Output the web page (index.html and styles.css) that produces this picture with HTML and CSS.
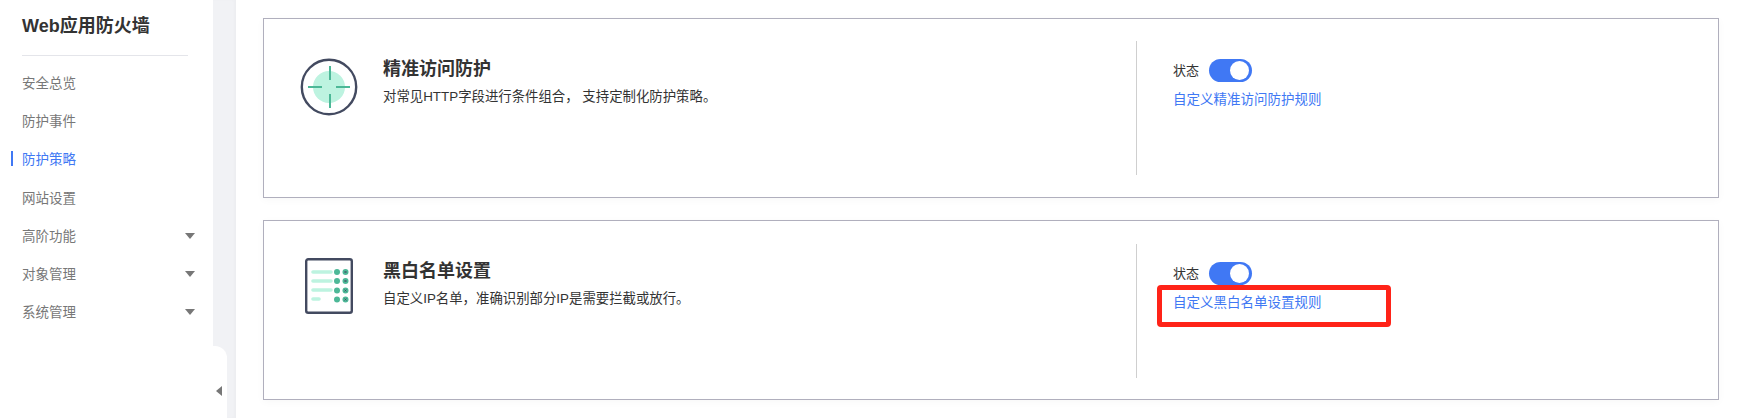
FILE: index.html
```html
<!DOCTYPE html>
<html lang="zh-CN">
<head>
<meta charset="utf-8">
<title>Web应用防火墙</title>
<link rel="stylesheet" href="styles.css">
</head>
<body>
<div class="page">
  <aside class="sidebar">
    <h1 class="brand">Web应用防火墙</h1>
    <ul class="menu">
      <li class="menu-item">安全总览</li>
      <li class="menu-item">防护事件</li>
      <li class="menu-item is-active">防护策略</li>
      <li class="menu-item">网站设置</li>
      <li class="menu-item">高阶功能<i class="caret"></i></li>
      <li class="menu-item">对象管理<i class="caret"></i></li>
      <li class="menu-item">系统管理<i class="caret"></i></li>
    </ul>
  </aside>
  <div class="gutter"><div class="collapse"><i class="collapse-arrow"></i></div></div>
  <main class="main">
    <section class="card">
      <svg class="card-icon" width="64" height="64" viewBox="0 0 64 64">
        <circle cx="32" cy="32" r="16" fill="#bdf3e0"/>
        <circle cx="32" cy="32" r="27.2" fill="none" stroke="#434a60" stroke-width="2.4"/>
        <path d="M11 32h14M39 32h14M33 11v14M33 39v14" fill="none" stroke="#4cb897" stroke-width="2"/>
      </svg>
      <div class="card-text">
        <h2 class="card-title">精准访问防护</h2>
        <p class="card-desc">对常见HTTP字段进行条件组合， 支持定制化防护策略。</p>
      </div>
      <div class="card-side">
        <div class="status"><span>状态</span><span class="switch"><i class="knob"></i></span></div>
        <a class="rule-link">自定义精准访问防护规则</a>
      </div>
    </section>
    <section class="card">
      <svg class="card-icon" width="64" height="64" viewBox="0 0 64 64">
        <rect x="9.2" y="2.2" width="45.6" height="53.6" rx="2" fill="#fff" stroke="#434a60" stroke-width="2.4"/>
        <path d="M16 15h18M16 24h18M16 33h18M16 42h6" fill="none" stroke="#bdf3e0" stroke-width="3.6" stroke-linecap="round"/>
        <g fill="#4cb897">
          <circle cx="40" cy="15" r="3"/><circle cx="48.500" cy="15" r="3"/>
          <circle cx="40" cy="24" r="3"/><circle cx="48.500" cy="24" r="3"/>
          <circle cx="40" cy="33.500" r="3"/><circle cx="48.500" cy="33.500" r="3"/>
          <circle cx="40" cy="42.500" r="3"/><circle cx="48.500" cy="42.500" r="3"/>
        </g>
        <path d="M47.500 14l2 2M49.500 14l-2 2M47.500 23l2 2M49.500 23l-2 2M47.500 32.500l2 2M49.500 32.500l-2 2M47.500 41.500l2 2M49.500 41.500l-2 2" stroke="#434a60" stroke-width=".8" fill="none"/>
      </svg>
      <div class="card-text">
        <h2 class="card-title">黑白名单设置</h2>
        <p class="card-desc">自定义IP名单，准确识别部分IP是需要拦截或放行。</p>
      </div>
      <div class="card-side">
        <div class="status"><span>状态</span><span class="switch"><i class="knob"></i></span></div>
        <a class="rule-link has-mark">自定义黑白名单设置规则<i class="mark"></i></a>
      </div>
    </section>
  </main>
</div>
</body>
</html>
```

FILE: styles.css
```css
* { box-sizing: border-box; }
html, body { margin: 0; height: 100%; background: #fff; overflow: hidden; }
body { font-family: "Liberation Sans", "Noto Sans CJK SC", sans-serif; color: #252b3a; }
ul, h1, h2, p { margin: 0; padding: 0; }
i { display: block; }

.page { display: flex; height: 418px; }

.sidebar { width: 213px; flex: none; background: #fff; padding: 0 25px 0 22px; }
.brand { font-size: 18px; line-height: 22px; font-weight: 700; color: #333; padding: 15px 0 18px; border-bottom: 1px solid #e4e5ea; width: 166px; }
.menu { list-style: none; padding-top: 7px; }
.menu-item { position: relative; display: flex; align-items: center; height: 38.2px; font-size: 13.500px; color: #777; }
.is-active { color: #4078f4; }
.is-active::before { content: ""; position: absolute; left: -11px; top: 12px; width: 2px; height: 15px; background: #4078f4; }
.caret { position: absolute; right: -7px; top: 17px; width: 0; height: 0; border: 5px solid transparent; border-top: 6px solid #777; border-bottom: 0; }

.gutter { position: relative; width: 23px; flex: none; background: #f1f2f5; box-shadow: inset -2px 0 3px rgba(0, 0, 0, .02); }
.collapse { position: absolute; left: 0; top: 346px; bottom: 0; width: 14px; background: #fff; border-top-right-radius: 12px; }
.collapse-arrow { position: absolute; left: 3px; top: 40px; width: 0; height: 0; border: 5px solid transparent; border-right: 6px solid #777; border-left: 0; }

.main { flex: 1; min-width: 0; padding: 18px 21px 0 27px; display: flex; flex-direction: column; gap: 22px; }

.card { display: flex; height: 180px; border: 1px solid #b0afbd; box-shadow: 0 2px 8px rgba(0, 0, 0, .03); background: #fff; }
.card-icon { flex: none; margin: 36px 0 0 33px; }
.card-text { flex: 1; min-width: 0; padding: 38px 0 0 22px; }
.card-title { font-size: 18px; line-height: 24px; font-weight: 700; color: #333; }
.card-desc { font-size: 13.400px; line-height: 20px; color: #333; margin-top: 6px; }

.card-side { flex: none; width: 582px; margin: 22px 0; height: 134px; border-left: 1px solid #cfcfcf; padding: 18px 0 0 36px; }
.card + .card .card-side { margin-top: 23px; }
.status { display: flex; align-items: center; gap: 10px; font-size: 13px; line-height: 23px; color: #333; }
.switch { display: flex; align-items: center; justify-content: flex-end; width: 43px; height: 23px; padding-right: 3px; border-radius: 12px; background: #4078f4; }
.knob { width: 19px; height: 19px; border-radius: 50%; background: #fff; }
.rule-link { position: relative; display: block; width: max-content; margin-top: 8px; font-size: 13.500px; line-height: 20px; color: #4078f4; }
.mark { position: absolute; left: -16px; top: -8px; width: 234px; height: 42px; border: 5px solid #ff2318; border-radius: 4px; }
```
